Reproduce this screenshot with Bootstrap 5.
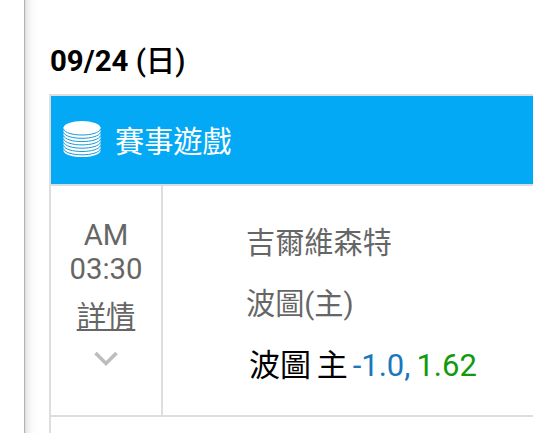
<!DOCTYPE html>
<html lang="zh-Hant">
<head>
  <meta charset="UTF-8">
  <meta name="viewport" content="width=device-width, initial-scale=1">
  <title>賽事遊戲</title>
  <!-- Bootstrap CSS -->
  <link href="https://cdn.jsdelivr.net/npm/bootstrap@5.3.3/dist/css/bootstrap.min.css" rel="stylesheet">
  <style>
    body {
      font-family: Roboto, "Noto Sans CJK TC", sans-serif;
      font-size: 29px;
      color: #666;
      background-color: #fff;
    }
    .side-gutter {
      width: 24px;
    }
    .page-panel {
      padding: 42px 0 0 24px;
      border-left: 1px solid #b4b4b4;
      background: linear-gradient(to right, #dcdcdc, #ececec 2px, #fafafa 7px, #fff 13px);
    }
    .match-date {
      height: 52px;
      padding-left: 1px;
      font-size: 29.4px;
      line-height: 38px;
      color: #000;
    }
    .match-date .weekday {
      font-weight: 500;
    }
    .match-table {
      border: solid #dedede;
      border-width: 2px 0 0 2px;
      background-color: #fff;
    }
    .match-header {
      height: 90px;
      padding-left: 12px;
      font-size: 29.2px;
      background-color: #04a9f5;
      border-bottom: 2px solid #d8dee0;
    }
    .match-header span {
      padding-top: 5px;
    }
    .coin-stack {
      width: 38px;
      height: 38px;
      margin: -3px 14px 0 0;
    }
    .match-row {
      height: 231px;
      border-bottom: 2px solid #dedede;
    }
    .time-cell {
      width: 112px;
      padding-top: 32px;
      border-right: 2px solid #dedede;
      font-size: 29.3px;
      line-height: 34px;
    }
    .detail-link {
      margin-top: 14px;
      color: #666;
      text-underline-offset: 2px;
      text-decoration-thickness: 2px;
    }
    .arrow-down {
      margin-top: 17px;
    }
    .team-cell {
      padding: 36px 0 0 83px;
      font-size: 29.2px;
      line-height: 42px;
    }
    .team-name {
      margin-bottom: 19px;
    }
    .odds-line {
      padding: 1px 0 0 3px;
      font-size: 31px;
      color: #000;
    }
    .pick {
      word-spacing: -2px;
    }
    .handicap {
      margin-left: 5px;
      color: #1878bd;
    }
    .odds {
      margin-left: 6px;
      color: #129a0c;
    }
  </style>
</head>
<body>
  <div class="d-flex vh-100 overflow-hidden">
    <div class="side-gutter flex-shrink-0"></div>

    <div class="page-panel flex-grow-1 d-flex flex-column">
      <h2 class="match-date fw-bold mb-0">09/24 <span class="weekday">(日)</span></h2>

      <div class="match-table flex-grow-1">
        <!-- 標題列 -->
        <div class="match-header d-flex align-items-center text-white">
          <svg class="coin-stack" viewBox="0 0 38 38">
            <path d="M0.5 7V31C3 39 35 39 37.5 31V7Z" fill="#fff"/>
            <ellipse cx="19" cy="7.5" rx="18.3" ry="6.5" fill="#fff"/>
            <g fill="none" stroke="#1599d8" stroke-width="1">
              <path d="M0.5 9C3 17 35 17 37.5 9"/>
              <path d="M0.5 12.3C3 20.3 35 20.3 37.5 12.3"/>
              <path d="M0.5 15.6C3 23.6 35 23.6 37.5 15.6"/>
              <path d="M0.5 18.9C3 26.9 35 26.9 37.5 18.9"/>
              <path d="M0.5 22.2C3 30.2 35 30.2 37.5 22.2"/>
              <path d="M0.5 25.5C3 33.5 35 33.5 37.5 25.5"/>
              <path d="M0.5 28.8C3 36.8 35 36.8 37.5 28.8"/>
            </g>
          </svg>
          <span>賽事遊戲</span>
        </div>

        <!-- 賽事 -->
        <div class="match-row d-flex">
          <div class="time-cell d-flex flex-column align-items-center flex-shrink-0">
            <div>AM</div>
            <div>03:30</div>
            <a class="detail-link" href="#">詳情</a>
            <svg class="arrow-down" width="24" height="16" viewBox="0 0 24 16">
              <path d="M1.5 2L12 12.5L22.5 2" fill="none" stroke="#bdbdbd" stroke-width="3.6"/>
            </svg>
          </div>
          <div class="team-cell flex-grow-1 text-nowrap">
            <div class="team-name">吉爾維森特</div>
            <div class="team-name">波圖(主)</div>
            <div class="odds-line"><span class="pick">波圖 主</span><span class="handicap">-1.0,</span><span class="odds">1.62</span></div>
          </div>
        </div>
      </div>
    </div>
  </div>

  <script src="https://cdn.jsdelivr.net/npm/bootstrap@5.3.3/dist/js/bootstrap.bundle.min.js"></script>
</body>
</html>
